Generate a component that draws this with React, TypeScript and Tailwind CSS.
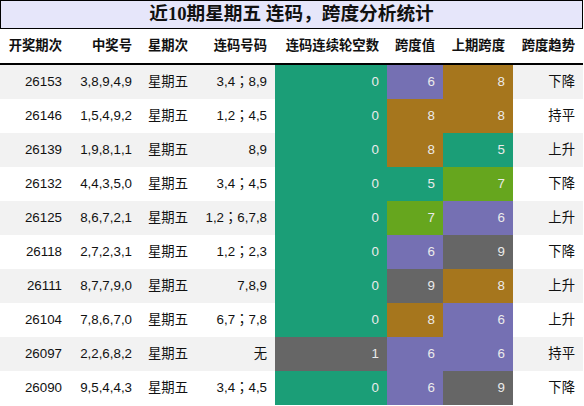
const C = {
  g: "bg-[#1b9e77]",
  p: "bg-[#7570b3]",
  o: "bg-[#a6761d]",
  k: "bg-[#666666]",
  l: "bg-[#66a61e]",
};

type Row = [string, string, string, [string, keyof typeof C], [string, keyof typeof C], [string, keyof typeof C], string];

const rows: Row[] = [
  ["26153", "3,8,9,4,9", "3,4；8,9", ["0", "g"], ["6", "p"], ["8", "o"], "下降"],
  ["26146", "1,5,4,9,2", "1,2；4,5", ["0", "g"], ["8", "o"], ["8", "o"], "持平"],
  ["26139", "1,9,8,1,1", "8,9", ["0", "g"], ["8", "o"], ["5", "g"], "上升"],
  ["26132", "4,4,3,5,0", "3,4；4,5", ["0", "g"], ["5", "g"], ["7", "l"], "下降"],
  ["26125", "8,6,7,2,1", "1,2；6,7,8", ["0", "g"], ["7", "l"], ["6", "p"], "上升"],
  ["26118", "2,7,2,3,1", "1,2；2,3", ["0", "g"], ["6", "p"], ["9", "k"], "下降"],
  ["26111", "8,7,7,9,0", "7,8,9", ["0", "g"], ["9", "k"], ["8", "o"], "上升"],
  ["26104", "7,8,6,7,0", "6,7；7,8", ["0", "g"], ["8", "o"], ["6", "p"], "上升"],
  ["26097", "2,2,6,8,2", "无", ["1", "k"], ["6", "p"], ["6", "p"], "持平"],
  ["26090", "9,5,4,4,3", "3,4；4,5", ["0", "g"], ["6", "p"], ["9", "k"], "下降"],
];

const grid = "grid grid-cols-[70px_70px_63px_72px_112px_56px_70px_70px]";
const headers = ["开奖期次", "中奖号", "星期次", "连码号码", "连码连续轮空数", "跨度值", "上期跨度", "跨度趋势"];

export default function App() {
  return (
    <div
      className="w-[584px] h-[406px] bg-white text-[13.33px] text-[#111] whitespace-nowrap"
      style={{ fontFamily: '"Liberation Sans", "Noto Sans CJK SC", sans-serif' }}
    >
      <div className="w-[583px] h-[29px] border border-black bg-[#e6e6fa] flex items-center justify-center">
        <span
          className="text-[18.67px] font-bold text-[#111] leading-none"
          style={{ fontFamily: '"Liberation Serif", "Noto Sans CJK SC", serif' }}
        >
          近10期星期五 连码，跨度分析统计
        </span>
      </div>

      <div className={`${grid} w-[583px] h-[36px] border-b-2 border-black font-bold`}>
        {headers.map((h, i) => (
          <div key={h} className={`flex items-center px-2 ${i === 2 ? "justify-start" : "justify-end"}`}>
            {h}
          </div>
        ))}
      </div>

      {rows.map((r, i) => (
        <div key={r[0]} className={`${grid} w-[583px] h-[34px] ${i % 2 === 0 ? "bg-[#f2f2f2]" : "bg-white"}`}>
          <div className="flex items-center justify-end px-2">{r[0]}</div>
          <div className="flex items-center justify-end px-2">{r[1]}</div>
          <div className="flex items-center justify-start px-2">星期五</div>
          <div
            className="flex items-center justify-end pr-2"
            style={{ fontFamily: '"Liberation Sans", "Noto Sans CJK TC", sans-serif' }}
          >
            {r[2]}
          </div>
          {[r[3], r[4], r[5]].map(([v, c], j) => (
            <div key={j} className={`flex items-center justify-end px-2 text-[#ebebeb] ${C[c]}`}>
              {v}
            </div>
          ))}
          <div className="flex items-center justify-end px-2">{r[6]}</div>
        </div>
      ))}
    </div>
  );
}
